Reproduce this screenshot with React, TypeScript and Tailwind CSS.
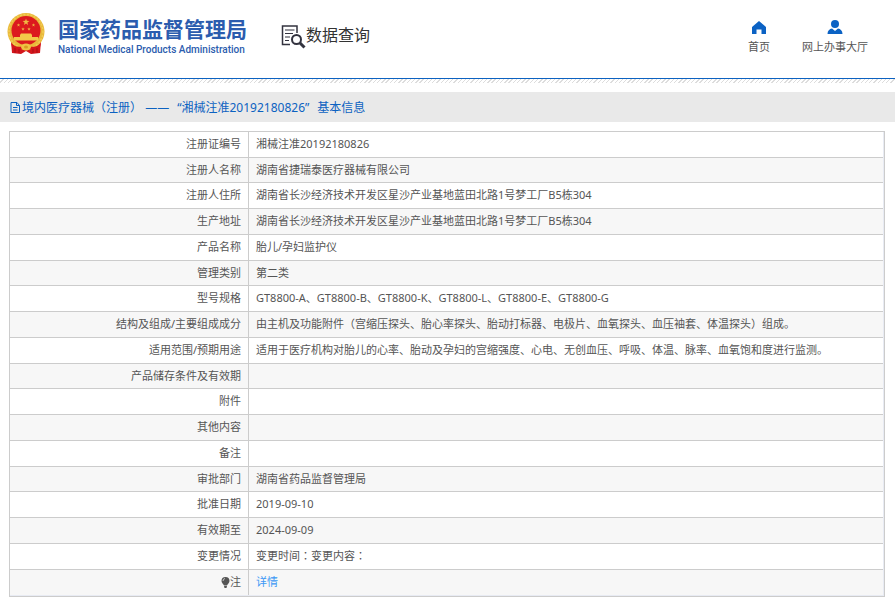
import React from "react";

const rows: { label: string; value: string }[] = [
  { label: "注册证编号", value: "湘械注准20192180826" },
  { label: "注册人名称", value: "湖南省捷瑞泰医疗器械有限公司" },
  { label: "注册人住所", value: "湖南省长沙经济技术开发区星沙产业基地蓝田北路1号梦工厂B5栋304" },
  { label: "生产地址", value: "湖南省长沙经济技术开发区星沙产业基地蓝田北路1号梦工厂B5栋304" },
  { label: "产品名称", value: "胎儿/孕妇监护仪" },
  { label: "管理类别", value: "第二类" },
  { label: "型号规格", value: "GT8800-A、GT8800-B、GT8800-K、GT8800-L、GT8800-E、GT8800-G" },
  { label: "结构及组成/主要组成成分", value: "由主机及功能附件（宫缩压探头、胎心率探头、胎动打标器、电极片、血氧探头、血压袖套、体温探头）组成。" },
  { label: "适用范围/预期用途", value: "适用于医疗机构对胎儿的心率、胎动及孕妇的宫缩强度、心电、无创血压、呼吸、体温、脉率、血氧饱和度进行监测。" },
  { label: "产品储存条件及有效期", value: "" },
  { label: "附件", value: "" },
  { label: "其他内容", value: "" },
  { label: "备注", value: "" },
  { label: "审批部门", value: "湖南省药品监督管理局" },
  { label: "批准日期", value: "2019-09-10" },
  { label: "有效期至", value: "2024-09-09" },
  { label: "变更情况", value: "变更时间：变更内容：" },
];

const labelCell = "w-[239px] border-r border-[#ccc] pb-px pr-[7px] text-right font-normal";
const valueCell = "border-[#ccc] pb-px pl-[7px] text-left";

// Full-width brackets and colons sit in the middle of their square.
function Centered({ text }: { text: string }) {
  return (
    <>
      {text.split(/([（）：])/).map((part, i) =>
        i % 2 ? (
          <span key={i} lang="zh-TW" className="font-['Noto_Sans_CJK_TC',sans-serif] leading-none">{part}</span>
        ) : (
          part
        ),
      )}
    </>
  );
}

const star = (cx: number, cy: number, r: number) =>
  Array.from({ length: 10 }, (_, i) => {
    const d = i % 2 ? r * 0.4 : r;
    const a = (Math.PI / 5) * i - Math.PI / 2;
    return `${(cx + d * Math.cos(a)).toFixed(2)},${(cy + d * Math.sin(a)).toFixed(2)}`;
  }).join(" ");

function Emblem() {
  return (
    <svg width="38" height="42" viewBox="0 0 38 42" aria-hidden="true">
      <path d="M4 28 L5 40 L14 41 L19 38 L24 41 L33 40 L34 28 Z" fill="#d4161c" />
      <circle cx="19" cy="18.500" r="18.500" fill="#e9b93a" />
      <circle cx="19" cy="18.500" r="17" fill="none" stroke="#f2cb55" strokeWidth="1.500" strokeDasharray="2 1.500" />
      <circle cx="19" cy="17.500" r="14.500" fill="#dc1a1e" />
      <polygon points={star(19, 9, 3.6)} fill="#f0b944" />
      <polygon points={star(11.5, 12, 1.8)} fill="#f0b944" />
      <polygon points={star(26.5, 12, 1.8)} fill="#f0b944" />
      <polygon points={star(16, 16, 1.8)} fill="#f0b944" />
      <polygon points={star(22, 16, 1.8)} fill="#f0b944" />
      <path d="M13 22 L14 20.500 H24 L25 22 V24 H31 V27.500 H7 V24 H13 Z" fill="#f3c849" />
      <path d="M4 30 C9 36 14 33 19 33 C24 33 29 36 34 30 L33 34 C28 38 24 36 19 36 C14 36 10 38 5 34 Z" fill="#d4161c" />
      <ellipse cx="19" cy="34" rx="5" ry="3.500" fill="#efc244" />
      <ellipse cx="19" cy="34" rx="2" ry="1.500" fill="#d99a22" />
      <path d="M8 35 V40 M12 36 V40 M26 36 V40 M30 35 V40" stroke="#a90e14" strokeWidth="1" />
    </svg>
  );
}

function SearchDocIcon() {
  return (
    <svg width="25" height="24" viewBox="0 0 25 24" fill="none" stroke="#33333f" aria-hidden="true">
      <path d="M16 8 V1 H1.500 V19.500 H9" strokeWidth="1.500" />
      <path d="M4 5 H13.500 M4 8.500 H12 M4 12 H9 M4 15.500 H8" strokeWidth="1.200" />
      <circle cx="15.500" cy="14.500" r="4.500" strokeWidth="2" fill="#fff" />
      <path d="M19 18 L23.500 22.500" strokeWidth="3" />
    </svg>
  );
}

export default function App() {
  return (
    <div className="bg-white font-['Noto_Sans','Noto_Sans_CJK_SC',sans-serif] text-[11px] text-[#555]">
      <header className="flex h-[79px] items-start border-b border-[#0c62c1] pl-[7px] pr-[27px]">
        <a href="#home" className="mt-[13px] flex gap-[13px] text-[#2b5cae]">
          <Emblem />
          <span className="mt-1 flex flex-col whitespace-nowrap">
            <span className="text-[21px] font-bold leading-[24px]">国家药品监督管理局</span>
            <span className="font-['Roboto',sans-serif] text-[10px] font-medium leading-[18px]">
              National Medical Products Administration
            </span>
          </span>
        </a>
        <h1 className="ml-[34px] mt-[25px] flex whitespace-nowrap text-[16px] font-normal leading-[20px] text-[#333]">
          <SearchDocIcon />
          数据查询
        </h1>
        <nav className="ml-auto mt-5 flex gap-8 whitespace-nowrap leading-[16px]">
          <a href="#index" className="flex flex-col items-center gap-1">
            <svg width="14" height="15" viewBox="0 0 14 15" fill="#0b62c4" aria-hidden="true">
              <path d="M7 1 L14 7 V14 H9.500 V9.500 H4.500 V14 H0 V7 Z" />
            </svg>
            首页
          </a>
          <a href="#hall" className="flex flex-col items-center gap-1">
            <svg width="16" height="15" viewBox="0 0 16 15" fill="#0b62c4" aria-hidden="true">
              <circle cx="8" cy="4" r="4" />
              <path d="M0.500 14 C0.500 10.500 2.500 9 5 8.500 L8 11 L11 8.500 C13.500 9 15.500 10.500 15.500 14 Z" />
            </svg>
            网上办事大厅
          </a>
        </nav>
      </header>
      <div className="h-[4px] bg-[repeating-linear-gradient(135deg,#fff_0px,#fff_2px,#ddd_2px,#ddd_3px)]" />

      <h2 className="mt-[9px] flex h-[30px] items-center whitespace-nowrap bg-[#e9e9e9] pl-[10px] pt-px text-[12px] font-normal text-[#0c62c1]">
        <svg width="12" height="12" viewBox="0 0 12 12" fill="none" stroke="#0c62c1" aria-hidden="true">
          <path d="M1 0.500 H7 L9.500 3.500 V10.500 H1 Z M6.500 0.500 V3.500 H9.500 M3 5.500 H7.500 M3 8 H7.500" />
        </svg>
        <span className="flex gap-2">
          <span><Centered text="境内医疗器械（注册） ——" /></span>
          <span>“湘械注准20192180826”</span>
          <span>基本信息</span>
        </span>
      </h2>

      <main className="ml-[9px] mr-[10px] mt-[9px] border border-[#ccc] bg-[#e8ebf3] pb-px pr-px">
        <table className="w-full table-fixed border-separate border-spacing-0 leading-[16px]">
          <tbody>
            {rows.map((row) => (
              <tr key={row.label} className="h-[26px] bg-white even:bg-[#f7f7f7] nth-[4n+2]:h-[25px]">
                <th scope="row" className={`${labelCell} border-b`}>{row.label}</th>
                <td className={`${valueCell} border-b`}><Centered text={row.value} /></td>
              </tr>
            ))}
            <tr className="h-[25px] bg-[#f7f7f7]">
              <th scope="row" className={labelCell}>
                <span className="flex items-center justify-end">
                  <svg width="9" height="11" viewBox="0 0 9 11" fill="#555" aria-hidden="true">
                    <path d="M4.500 0 A4 4 0 0 1 8.500 4 C8.500 6 6.500 7 6 8.500 H3 C2.500 7 0.500 6 0.500 4 A4 4 0 0 1 4.500 0 Z M3 9 H6 L5.500 11 H3.500 Z" />
                    <path d="M2 4 A2.500 2.500 0 0 1 4 1.500" fill="none" stroke="#ccc" />
                  </svg>
                  注
                </span>
              </th>
              <td className={valueCell}>
                <a href="#detail" className="text-[#3b98f5]">详情</a>
              </td>
            </tr>
          </tbody>
        </table>
      </main>
    </div>
  );
}
